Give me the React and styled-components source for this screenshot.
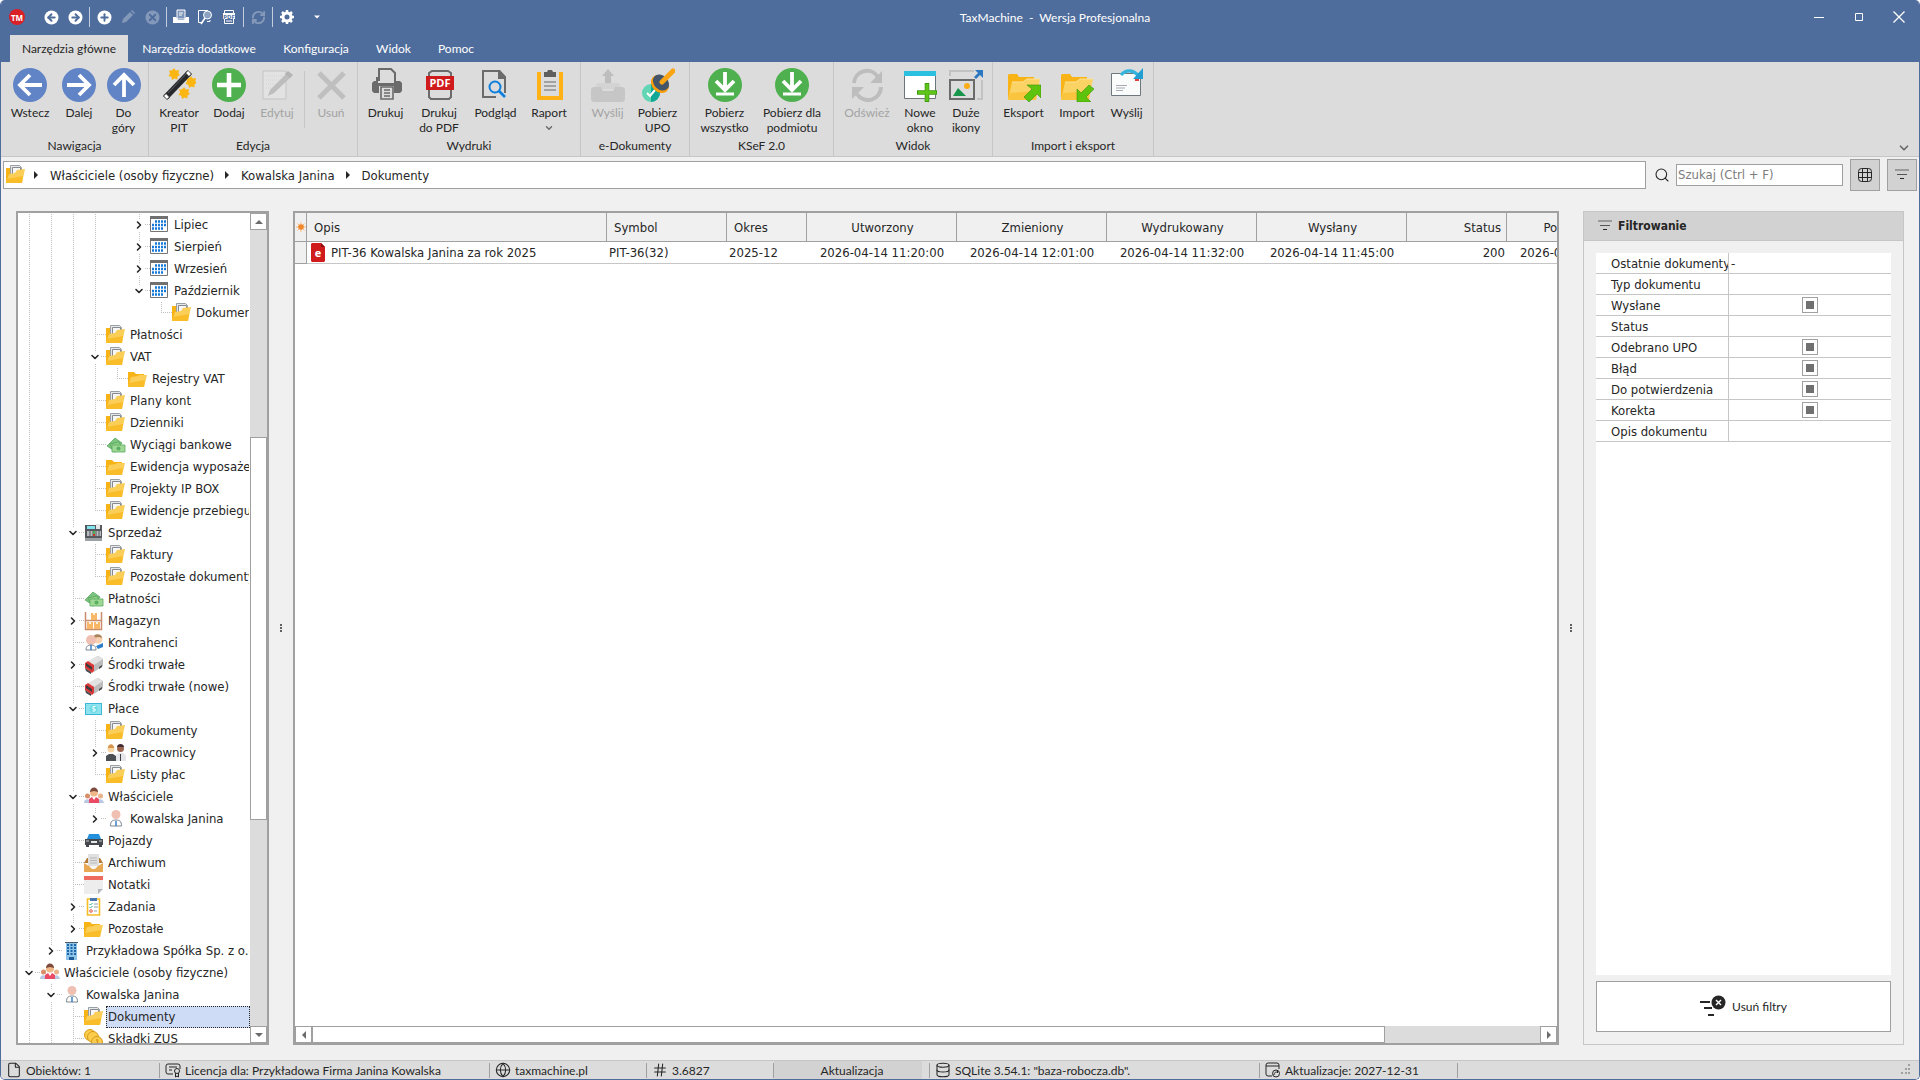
import React from "react";
import styled, { createGlobalStyle, css } from "styled-components";
import {
  ArrowLeft,
  ArrowRight,
  ChevronDown,
  ChevronRight,
  Database,
  File,
  Globe,
  Hash,
  Plus,
  RefreshCw,
  Search,
  X,
} from "lucide-react";

const GlobalStyle = createGlobalStyle`
  * {
    box-sizing: border-box;
  }

  body {
    margin: 0;
    background: #fff;
    color: #262626;
    font-family: "DejaVu Sans Condensed", "Noto Sans", sans-serif;
    font-size: 13px;
  }

  button,
  input {
    margin: 0;
    padding: 0;
    border: 0;
    background: none;
    color: inherit;
    font: inherit;
  }

  svg {
    display: block;
    flex: none;
  }
`;

const uiFont = css`
  font-family: Lato, "Open Sans", sans-serif;
  font-size: 12px;
`;

/* ---------- window ---------- */

const Window = styled.div`
  display: flex;
  flex-direction: column;
  height: 100vh;
  min-height: 480px;
  overflow: hidden;
  background: #f0f0f0;
  border: 1px solid #4f6d9c;
  border-top: 0;
  border-radius: 5px;
`;

const Caption = styled.header`
  background: #4f6d9c;
  color: #fff;
  ${uiFont}
`;

const TitleBar = styled.div`
  display: flex;
  align-items: center;
  height: 34px;
  margin-bottom: 1px;
`;

const Logo = styled.span`
  display: grid;
  place-items: center;
  width: 16px;
  height: 16px;
  margin: 0 14px 0 8px;
  border-radius: 50%;
  background: #d92027;
  font-family: "Open Sans", sans-serif;
  font-size: 8px;
  font-weight: 700;
`;

const QuickButton = styled.button`
  display: grid;
  place-items: center;
  width: 24px;
  height: 24px;
  color: #fff;
  opacity: ${(p) => (p.disabled ? 0.3 : 1)};
`;

const QuickLine = styled.span`
  width: 1px;
  height: 20px;
  margin: 0 2px;
  background: #c3cddd;
`;

const QuickMore = styled(QuickButton)`
  margin-left: 6px;
`;

const Title = styled.h1`
  flex: 1;
  margin: 0;
  padding-right: 18px;
  text-align: center;
  font-size: 12px;
  font-weight: 400;
  white-space: pre;
`;

const WindowButton = styled(QuickButton)`
  width: 40px;
`;

const Tabs = styled.nav`
  display: flex;
  gap: 2px;
  height: 27px;
  padding-left: 9px;
`;

const Tab = styled.button`
  min-width: ${(p) => p.$width}px;
  background: ${(p) => (p.$active ? "#dcdcdc" : "transparent")};
  color: ${(p) => (p.$active ? "#262626" : "#fff")};
  white-space: nowrap;
`;

/* ---------- ribbon ---------- */

const Ribbon = styled.div`
  display: flex;
  height: 95px;
  background: #dcdcdc;
  border-bottom: 1px solid #c6c6c6;
  ${uiFont}
`;

const Group = styled.section`
  display: flex;
  flex-direction: column;
  justify-content: space-between;
  padding: 6px 4px 2px;
  border-right: 1px solid #c6c6c6;
`;

const GroupButtons = styled.div`
  display: flex;
`;

const GroupTitle = styled.div`
  text-align: center;
  line-height: 16px;
`;

const RibbonButton = styled.button`
  display: flex;
  flex-direction: column;
  align-items: center;
  width: ${(p) => p.$width}px;
  gap: 3px;
  line-height: 15px;
  color: ${(p) => (p.disabled ? "#a3a3a3" : "#262626")};
`;

const RibbonLabel = styled.span`
  white-space: pre;
`;

const RibbonLine = styled.span`
  width: 1px;
  height: 57px;
  margin: 3px 4px 0 3px;
  background: #c6c6c6;
`;

const Collapse = styled.button`
  align-self: flex-end;
  margin: 0 8px 1px auto;
  color: #6b6b6b;
`;

/* ---------- address bar ---------- */

const AddressRow = styled.div`
  display: flex;
  align-items: center;
  height: 36px;
  padding: 0 2px;
`;

const Breadcrumbs = styled.nav`
  display: flex;
  flex: 1;
  align-items: center;
  height: 28px;
  padding-left: 2px;
  gap: 6px;
  background: #fff;
  border: 1px solid #a0a0a0;
`;

const CrumbItem = styled.span`
  display: flex;
  align-items: center;
  gap: 10px;
  margin-right: 3px;
`;

const Crumb = styled.a`
  color: #262626;
  text-decoration: none;
`;

const SearchLabel = styled.label`
  display: flex;
  align-items: center;
  gap: 6px;
  margin-left: 8px;
`;

const SearchInput = styled.input`
  width: 167px;
  height: 22px;
  padding: 0 1px 1px;
  background: #fff;
  border: 1px solid #a0a0a0;

  &::placeholder {
    color: #7d7d7d;
  }
`;

const ToggleButton = styled.button`
  display: grid;
  place-items: center;
  width: 30px;
  height: 32px;
  margin-left: 7px;
  background: #d2d2d2;
  border: 1px solid #a0a0a0;
`;

/* ---------- work area ---------- */

const Work = styled.main`
  display: flex;
  flex: 1;
  min-height: 0;
  padding: 18px 15px 15px;
`;

const Splitter = styled.div`
  display: flex;
  flex: none;
  flex-direction: column;
  align-items: center;
  justify-content: center;
  gap: 1px;
  width: 24px;
`;

const Dot = styled.i`
  width: 2px;
  height: 2px;
  background: #606060;
`;

const TreePanel = styled.aside`
  display: flex;
  flex: none;
  width: 253px;
  overflow: hidden;
  background: #fff;
  border: 2px solid #a0a0a0;
`;

const Tree = styled.ul`
  flex: 1;
  min-width: 0;
  margin: 0;
  padding: 1px 0 0;
  overflow: hidden;
  list-style: none;
`;

const TreeRow = styled.li`
  display: flex;
  height: 22px;
  white-space: nowrap;
`;

const vertical = "repeating-linear-gradient(#c0c0c0 0 1px, transparent 1px 2px)";
const horizontal = "repeating-linear-gradient(90deg, #c0c0c0 0 1px, transparent 1px 2px)";

const guides = {
  none: css``,
  line: css`
    background: ${vertical} 11px 0 / 1px 22px no-repeat;
  `,
  tee: css`
    background: ${vertical} 11px 0 / 1px 22px no-repeat, ${horizontal} 11px 10px / 11px 1px no-repeat;
  `,
  elbow: css`
    background: ${vertical} 11px 0 / 1px 11px no-repeat, ${horizontal} 11px 10px / 11px 1px no-repeat;
  `,
};

const Guide = styled.span`
  display: grid;
  flex: none;
  place-items: center;
  width: 22px;
  ${(p) => guides[p.$kind]}
`;

const Expander = styled.button`
  display: grid;
  place-items: center;
  width: 12px;
  height: 12px;
  background: #fff;
`;

const TreeIcon = styled.span`
  display: flex;
  flex: none;
  align-items: center;
  width: 22px;
`;

const TreeLabel = styled.span`
  flex: 1;
  min-width: 0;
  padding-left: 1px;
  overflow: hidden;
  border: 1px dotted ${(p) => (p.$selected ? "#262626" : "transparent")};
  background: ${(p) => (p.$selected ? "#cfdcf5" : "none")};
  line-height: 20px;
`;

const ScrollBar = styled.div`
  display: flex;
  flex: none;
  flex-direction: ${(p) => (p.$vertical ? "column" : "row")};
  ${(p) => (p.$vertical ? "width: 17px;" : "height: 17px;")}
  background: #dcdcdc;
`;

const ScrollButton = styled.button`
  display: grid;
  flex: none;
  place-items: center;
  width: 17px;
  height: 17px;
  background: #fff;
  border: 1px solid #a0a0a0;
`;

const Track = styled.div`
  flex: ${(p) => p.$size} 1 0;
`;

const Thumb = styled(Track)`
  background: #fff;
  border: 1px solid #a0a0a0;
`;

/* ---------- documents ---------- */

const GridPanel = styled.section`
  display: flex;
  flex: 1;
  flex-direction: column;
  min-width: 0;
  overflow: hidden;
  background: #fff;
  border: 2px solid #a0a0a0;
`;

const GridView = styled.div`
  flex: 1;
  overflow: hidden;
`;

const Table = styled.table`
  width: 1362px;
  table-layout: fixed;
  border-collapse: separate;
  border-spacing: 0;
`;

const Head = styled.th`
  width: ${(p) => p.$width}px;
  height: 29px;
  padding: ${(p) => (p.$mark ? "0" : "1px 5px 0 7px")};
  border-right: 1px solid #a0a0a0;
  border-bottom: 1px solid #a0a0a0;
  background: #f0f0f0;
  font-weight: 400;
  text-align: ${(p) => p.$align || "left"};
`;

const Cell = styled.td`
  height: 22px;
  padding: 0 2px;
  border-bottom: 1px solid #c6c6c6;
  text-align: ${(p) => p.$align || "left"};
  white-space: nowrap;
`;

const MarkCell = styled(Cell)`
  background: #f0f0f0;
  border-right: 1px solid #a0a0a0;
  border-bottom-color: #a0a0a0;
`;

const DocName = styled.div`
  display: flex;
  align-items: center;
  gap: 6px;
  padding-left: 2px;
`;

/* ---------- filters ---------- */

const FilterPanel = styled.aside`
  display: flex;
  flex: none;
  flex-direction: column;
  width: 321px;
  border: 1px solid #c6c6c6;
`;

const FilterHead = styled.h2`
  display: flex;
  align-items: center;
  gap: 6px;
  height: 29px;
  margin: 0;
  padding: 0 0 1px 14px;
  background: #d2d2d2;
  border-bottom: 1px solid #c6c6c6;
  font-size: 12px;
`;

const FilterBody = styled.div`
  flex: 1;
  margin: 12px 12px 6px;
  background: #fff;
`;

const FilterRow = styled.label`
  display: grid;
  grid-template-columns: 132px 1fr;
  height: 21px;
  border-bottom: 1px solid #c6c6c6;
  line-height: 21px;
`;

const FilterName = styled.span`
  padding-left: 15px;
  overflow: hidden;
  white-space: nowrap;
`;

const FilterValue = styled.span`
  display: grid;
  place-items: center;
  border-left: 1px solid #c6c6c6;
`;

const FilterInput = styled.input`
  width: 100%;
  padding-left: 2px;
`;

const TriState = styled.input`
  appearance: none;
  width: 16px;
  height: 16px;
  border: 1px solid #a0a0a0;
  background: linear-gradient(#707070, #707070) center / 8px 8px no-repeat;
`;

const ClearButton = styled.button`
  display: flex;
  align-items: center;
  justify-content: center;
  gap: 6px;
  height: 51px;
  margin: 0 12px 12px;
  background: #fff;
  border: 1px solid #a0a0a0;
  ${uiFont}
`;

/* ---------- status bar ---------- */

const StatusBar = styled.footer`
  display: flex;
  flex: none;
  align-items: center;
  height: 19px;
  background: #dcdcdc;
  border-top: 1px solid #c6c6c6;
  ${uiFont}
`;

const StatusItem = styled.div`
  display: flex;
  align-items: center;
  gap: 4px;
  width: ${(p) => p.$width}px;
  height: 15px;
  padding-left: 5px;
  border-right: 1px solid #a0a0a0;
  white-space: nowrap;
`;

const StatusAction = styled.button`
  width: 148px;
  height: 18px;
  padding-left: 8px;
  background: #d2d2d2;
`;

const Grip = styled.span`
  margin: 0 8px 0 auto;
`;

/* ---------- icons ---------- */

const Svg = ({ size = 34, children, ...rest }) => (
  <svg width={size} height={size} viewBox={`0 0 ${size} ${size}`} fill="none" {...rest}>
    {children}
  </svg>
);

const ArrowIcon = ({ turn = 0 }) => (
  <Svg>
    <circle cx="17" cy="17" r="17" fill="#6184c6" />
    <path
      d="M29 17H8M17 7 7 17l10 10"
      stroke="#fff"
      strokeWidth="3.8"
      transform={`rotate(${turn} 17 17)`}
    />
  </Svg>
);

const star = "m0-6 1.8 2.6 3.2-.6-.6 3.2L6 1 3.4 2.6 3.6 5.6.6 4.4-2 6l-.6-3.2L-5.6 2l1.6-2.6L-5-3.6l3.2-.2z";

const WandIcon = () => (
  <Svg>
    {[[12, 6], [29, 14], [22, 25]].map(([x, y]) => (
      <path key={x} d={star} transform={`translate(${x} ${y})`} fill="#fbb614" />
    ))}
    <path d="M4 29 27 5" stroke="#26282b" strokeWidth="6" />
    <path d="M6 25 25 5" stroke="#5b5e63" strokeWidth="1" />
    <path d="m3 30 3-3M25 7l3-3" stroke="#3a3d40" strokeWidth="6" />
    <path d="m3.5 29.5 2-2M25.5 6.5l2-2" stroke="#fff" strokeWidth="4" />
  </Svg>
);

const AddIcon = () => (
  <Svg>
    <circle cx="17" cy="17" r="17" fill="#4fb04f" />
    <path d="M17 5v24M5 17h24" stroke="#fff" strokeWidth="4.6" />
  </Svg>
);

const EditIcon = () => (
  <Svg>
    <path d="M3 3h23v28H3z" fill="#e2e2e2" stroke="#c4c4c4" />
    <path d="M6 8h17M6 12h16M6 16h12M6 20h9" stroke="#d4d4d4" strokeDasharray="1 1" />
    <path d="m8 28 2-6L27 5l4 4-17 16z" fill="#bdbdbd" />
    <path d="M25 6l3-3 5 4-3 3z" fill="#b3b3b3" />
  </Svg>
);

const DeleteIcon = () => (
  <Svg>
    <path d="m5 5 25 25M30 5 5 30" stroke="#bfbfbf" strokeWidth="5" />
  </Svg>
);

const PrintIcon = () => (
  <Svg>
    <path d="M10 13V1h12l4 4v8" stroke="#6b6b6b" strokeWidth="2" />
    <path d="M5 13h2v-4h2v6h16V9h2v4h4l2 2v8l-2 2H5l-2-2v-8z" fill="#6b6b6b" />
    <path d="M10 18h15v14H10z" fill="#dcdcdc" />
    <path d="M12 19h12v12H12zM15 22h6M15 25h6M15 28h6" stroke="#6b6b6b" strokeWidth="1.6" />
  </Svg>
);

const PdfIcon = () => (
  <Svg>
    <path d="M7 8V5l3-2h16l3 2v24l-2 2H9l-2-2z" stroke="#6b6b6b" strokeWidth="2" />
    <rect x="4" y="8" width="28" height="14" fill="#cf1b1b" />
    <text x="18" y="19" textAnchor="middle" fill="#fff" fontSize="11" fontWeight="700" fontFamily="Open Sans">
      PDF
    </text>
  </Svg>
);

const PreviewIcon = () => (
  <Svg>
    <path d="M8 29H4V3h16l6 6v16" stroke="#6b6b6b" strokeWidth="2" />
    <path d="M19 2h2l6 7v2h-8z" fill="#6b6b6b" />
    <path d="M8 29h9" stroke="#6b6b6b" strokeWidth="2" />
    <circle cx="16" cy="19" r="5.5" fill="#dcdcdc" stroke="#0d7fdc" strokeWidth="2" />
    <path d="m20 23 6 6" stroke="#0d7fdc" strokeWidth="2.6" />
  </Svg>
);

const ReportIcon = () => (
  <Svg>
    <path d="M7 4v26h22V4" fill="#dcdcdc" stroke="#ffb115" strokeWidth="4" />
    <path d="M12 4h3l1-2h4l1 2h3v5H12z" fill="#5f5f5f" />
    <path d="M12 14h12M12 18h12M12 22h12" stroke="#8e8e8e" strokeWidth="1.6" />
  </Svg>
);

const UploadIcon = () => (
  <Svg>
    <path d="M6 15h22l3 6H3z" fill="#d3d3d3" />
    <path d="M2 19h8l2 4h10l2-4h8l2 2v11l-2 2H2l-2-2V21z" fill="#c6c6c6" />
    <path d="m17 1 6 7h-3v7h-6V8h-3z" fill="#bdbdbd" />
  </Svg>
);

const StampIcon = () => (
  <Svg>
    <circle cx="10" cy="25" r="9" fill="#62d6b4" />
    <path d="M10 16a9 9 0 0 1 0 18z" fill="#0fa896" />
    <path d="m6 25 3 3 5-6" stroke="#fff" strokeWidth="2" />
    <ellipse cx="19" cy="16" rx="10" ry="8" transform="rotate(45 19 16)" fill="#f99d0b" />
    <ellipse cx="20" cy="14.5" rx="9" ry="7" transform="rotate(45 20 14.5)" fill="#44556a" />
    <path d="m21 14 11-11" stroke="#fba515" strokeWidth="5" strokeLinecap="round" />
  </Svg>
);

const DownloadIcon = () => (
  <Svg>
    <circle cx="17" cy="17" r="17" fill="#4fb04f" />
    <path d="M17 4v18M8 13l9 9 9-9" stroke="#fff" strokeWidth="3.8" />
    <path d="M8 26h18" stroke="#fff" strokeWidth="3" />
  </Svg>
);

const RefreshIcon = () => (
  <Svg>
    <path d="M4 15A13 13 0 0 1 28 9M31 19A13 13 0 0 1 7 26" stroke="#bdbdbd" strokeWidth="4" />
    <path d="M32 3v12H20zM2 31V19h12z" fill="#bdbdbd" />
  </Svg>
);

const NewWindowIcon = () => (
  <Svg>
    <path d="M1.5 3.5h31v27h-31z" fill="#fff" stroke="#6c757c" />
    <path d="M1 3h32v5H1z" fill="#2bbfe0" />
    <path d="M24 15v19M14 24.5h20" stroke="#3f9c10" strokeWidth="4.6" />
    <path d="M24 16v17M15 24.5h18" stroke="#5fc419" strokeWidth="3" />
  </Svg>
);

const LargeIconsIcon = () => (
  <Svg>
    <path d="M1 8V3h24M28 31h5V12" stroke="#c2c2c2" strokeWidth="2" />
    <path d="M1 12h24v19H1z" stroke="#6b6b6b" strokeWidth="2" />
    <path d="m4 28 5-8 8 8z" fill="#17954a" />
    <circle cx="18" cy="18" r="3" fill="#fbac18" />
    <path d="M26 2h8v8zM25 9l6-6 2 2-6 6z" fill="#2b78c0" />
  </Svg>
);

const BigFolder = () => (
  <>
    <path d="M1 7l1-1h8l2 3h15v5H1zM1 10h5v21l-5-1z" fill="#f8b417" />
    <path d="M5 14h11l4-3h13l-4 21H1z" fill="#fbd264" />
    <path d="m3 25 27-2-1 9H1z" fill="#f9c53f" />
    <path d="M5 14h11l4-3h13" stroke="#fce29a" />
  </>
);

const ExportIcon = () => (
  <Svg>
    <BigFolder />
    <path d="M20 17h14v13l-4-4-8 8-5-5 8-8z" fill="#5ec30c" stroke="#3b9009" strokeWidth=".6" />
  </Svg>
);

const ImportIcon = () => (
  <Svg>
    <BigFolder />
    <path d="M17 34V21l4 4 8-8 5 4-8 8 5 5z" fill="#5ec30c" stroke="#3b9009" strokeWidth=".6" />
  </Svg>
);

const SendIcon = () => (
  <Svg>
    <path d="M1.5 5.5h29v22h-29z" fill="#fafbfb" stroke="#6f777e" />
    <path d="M6 17.5h11M6 20h9M6 22.5h7" stroke="#a5abb0" />
    <path d="M25 9h4v4h-4z" fill="#e0423d" />
    <path d="M11 7c5-6 12-5 17 0" stroke="#35b5dd" strokeWidth="3.2" />
    <path d="M33 0v11H23z" fill="#229fd2" />
  </Svg>
);

const Folder = ({ papers }) =>
  papers ? (
    <Svg size={20}>
      <path d="M0 3h4v14H0z" fill="#f8b417" />
      <path d="M4.5.5h9l2 2v8h-11z" fill="#e6e7e8" stroke="#9a9fa3" />
      <path d="M6.5 2.500h8v8h-8z" fill="#f6f6f6" stroke="#858b90" />
      <path d="m3 9 6-1 2-3 8-1-3 14H0z" fill="#fbce57" />
      <path d="m1 14 16-3-1 7H0z" fill="#f9bd2a" />
    </Svg>
  ) : (
    <Svg size={20}>
      <path d="M0 3h6l2 2h8v4H0zM0 5h4v12H0z" fill="#f8b417" />
      <path d="m3 8 7-1 1-1h8l-3 12H0z" fill="#fbce57" />
      <path d="m1 14 16-3-1 7H0z" fill="#f9bd2a" />
    </Svg>
  );

const Calendar = () => (
  <Svg size={20}>
    <path d="M.5 2.500h17v14H.5z" fill="#fff" stroke="#757575" />
    <path d="M0 1h18v3H0z" fill="#707070" />
    <path d="M5 6.500h11M2 10h14M2 13.500h11" stroke="#1479d8" strokeWidth="2.4" strokeDasharray="2 1" />
  </Svg>
);

const Money = () => (
  <Svg size={20}>
    <path d="m1 11 8-8 7 5-6 9z" fill="#7cc47f" stroke="#4fa158" strokeWidth=".7" />
    <path d="m4 9 9-2 4 8-9 2z" fill="#92cf87" stroke="#4fa158" strokeWidth=".7" />
    <path d="M6 10h13v7H6z" fill="#9fd894" stroke="#58a95f" strokeWidth=".8" />
    <circle cx="12.5" cy="13.5" r="2" fill="#5aae62" />
  </Svg>
);

const Register = () => (
  <Svg size={20}>
    <path d="M1 2h17v16H1z" fill="#55595e" />
    <path d="M3 3h8v3H3z" fill="#7fe3f2" />
    <path d="M3 8h14v5H3z" fill="#b9bcbf" />
    <path d="M6 8v5M9 8v5M12 8v5M15 8v5" stroke="#55595e" />
    <path d="M9 8h2v3H9z" fill="#4caf50" />
    <path d="M9 11h2v2H9z" fill="#d0392f" />
    <path d="M12 1h4v5h-4z" fill="#e6e6e6" />
    <path d="M1 15h17v3H1z" fill="#9ba0a5" />
  </Svg>
);

const Warehouse = () => (
  <Svg size={20}>
    <path d="M1.5 1v18M17.5 1v18M1 9.500h17M1 18.500h17" stroke="#c98c6c" strokeWidth="1.5" />
    <path d="M7 2h6v7H7zM3 11h6v7H3zM10 11h6v7h-6z" fill="#f8b767" />
    <path d="M9 2h2v2H9zM5 11h2v2H5zM12 11h2v2h-2z" fill="#fff0d9" />
  </Svg>
);

const Partners = () => (
  <Svg size={20}>
    <circle cx="14" cy="6" r="4.5" fill="#f6cfb1" />
    <path d="M9 5c0-5 9-5 9 0l-3-1z" fill="#a8835b" />
    <path d="m12 13 7-3v4l-5 2z" fill="#2d7fcd" />
    <circle cx="7" cy="7" r="5" fill="#efbfb2" />
    <path d="M2 17c0-4 2-5 5-5s5 1 5 5z" fill="#fff" stroke="#7d8790" />
    <path d="M7 12v5" stroke="#3880c4" strokeWidth="1.5" />
  </Svg>
);

const Truck = () => (
  <Svg size={20}>
    <path d="m8 6 6-5 5 3v7l-9 6z" fill="#bcbcbc" />
    <path d="m4 6 9-5 6 3-9 6z" fill="#e2e2e2" />
    <path d="m1 8 3-2 6 4v6l-2 2-7-5z" fill="#dc3838" />
    <path d="m2 8 6 4v3L2 11z" fill="#3a3d40" />
    <path d="m1 13 6 4v2l-5-3zM15 12l3-2v2l-3 2z" fill="#46494d" />
  </Svg>
);

const Banknote = () => (
  <Svg size={20}>
    <path d="M1 4h17v12H1z" fill="#3cb7d8" />
    <path d="M2 5h15v10H2z" fill="#8fe3ee" />
    <circle cx="9.5" cy="10" r="4" fill="#6edbe7" />
    <path d="M11.5 7.500H9v2.500h2v2H8.500" stroke="#fff" />
  </Svg>
);

const Workers = () => (
  <Svg size={20}>
    <circle cx="5" cy="6" r="3.5" fill="#f8d6a5" />
    <path d="M2 5c0-5 6-5 6 0z" fill="#d8954b" />
    <path d="M0 18v-5l3-2h4l3 2v5z" fill="#4c4f54" />
    <circle cx="14.5" cy="5.5" r="3.5" fill="#9a6650" />
    <path d="M11 4c0-4 7-4 7 0z" fill="#432d33" />
    <path d="M10 18v-6l3-2h4l3 2v6z" fill="#e4e6e9" />
    <path d="M14 11h1v7h-1z" fill="#3d4045" />
  </Svg>
);

const Team = () => (
  <Svg size={20}>
    <circle cx="3.5" cy="9" r="2.5" fill="#d98e68" />
    <circle cx="16.5" cy="9" r="2.5" fill="#eab38c" />
    <path d="M0 16c0-5 6-5 7 0zM13 16c0-5 6-5 7 0z" fill="#b7c7e4" />
    <circle cx="10" cy="5.5" r="4" fill="#f0b789" />
    <path d="M6 5c0-6 8-6 8 0l-4-1z" fill="#7c4a3f" />
    <path d="M5 16v-4l3-2h4l3 2v4z" fill="#ea4a63" />
    <path d="m8 10 2 3 2-3z" fill="#fff" />
  </Svg>
);

const Person = () => (
  <Svg size={20}>
    <circle cx="10" cy="5.5" r="4.5" fill="#efbfb2" />
    <path d="M4.5 17c0-5 2-6 5.500-6s5.500 1 5.500 6z" fill="#fff" stroke="#7d8790" />
    <path d="M10 12v5" stroke="#3880c4" strokeWidth="1.5" />
  </Svg>
);

const Car = () => (
  <Svg size={20}>
    <path d="M5 3h10l2 5H3z" fill="#2390de" />
    <path d="M1 8h18v6H1zM2 13h3v3H2zM15 13h3v3h-3z" fill="#45484d" />
    <path d="M7 10h6v2H7z" fill="#e8e8e8" />
    <path d="M2 10h3M15 10h3" stroke="#c7cacd" />
  </Svg>
);

const Archive = () => (
  <Svg size={20}>
    <path d="m0 10 3-5h13l3 5z" fill="#b77a35" />
    <path d="M4 1h11v12H4z" fill="#e0e0e0" />
    <path d="M6 5h7M6 7.500h7M6 10h7" stroke="#b9b9b9" />
    <path d="m0 10 5 3h9l5-3v9H0z" fill="#e9a853" />
    <path d="M5 13h9l-3 3H8z" fill="#f7f7f7" />
  </Svg>
);

const Note = () => (
  <Svg size={20}>
    <path d="M0 1h19v13l-5 5H0z" fill="#ededed" />
    <path d="M0 1h19v4H0z" fill="#ee6b60" />
    <path d="M14 19v-5h5z" fill="#b5b9bd" />
  </Svg>
);

const Tasks = () => (
  <Svg size={20}>
    <path d="M3.5 2h12v16h-12z" fill="#fff" stroke="#f6bd27" strokeWidth="1.6" />
    <path d="M6 1h7v3H6z" fill="#4c77ad" />
    <path d="m5.5 7 1 1 2-2M5.500 10l1 1 2-2" stroke="#31b197" />
    <path d="M10 7h4M10 10h4M10 14h3" stroke="#8d9ba8" />
    <circle cx="7" cy="14" r="1.3" stroke="#e5534b" />
  </Svg>
);

const Office = () => (
  <Svg size={20}>
    <path d="M4 1h11v18H4z" fill="#8fc3e8" />
    <path d="M3 1h13v1H3z" fill="#4e5a63" />
    <path d="M5 4h9.500M5 7h9.500M5 10h9.500M5 13h9.500" stroke="#1d66a8" strokeWidth="2" strokeDasharray="2 1.5" />
    <path d="M7 16h5v3H7z" fill="#1d5c96" />
  </Svg>
);

const Coins = () => (
  <Svg size={20}>
    {[[6, 6], [9, 8], [13, 13]].map(([x, y]) => (
      <circle key={x} cx={x} cy={y} r="5.5" fill="#fbcd4a" stroke="#d89b1c" />
    ))}
    <path d="M12 11h1.500v5" stroke="#d89b1c" strokeWidth="1.5" />
  </Svg>
);

const FilterLines = () => (
  <Svg size={14}>
    <path d="M0 2h14" stroke="#9a9a9a" strokeWidth="2" />
    <path d="M2 6.500h10" stroke="#555" />
    <path d="M5 10.500h4" stroke="#262626" />
  </Svg>
);

const GridIcon = () => (
  <Svg size={14}>
    <rect x=".5" y=".5" width="13" height="13" rx="3" stroke="#262626" />
    <path d="M4.5 0v14M9.500 0v14M0 4.500h14M0 9.500h14" stroke="#262626" />
  </Svg>
);

const ClearFilterIcon = () => (
  <Svg size={26}>
    <path d="M0 8h10M4 14h8M8 21h6" stroke="#262626" strokeWidth="2" />
    <circle cx="18.5" cy="8.5" r="7" fill="#262626" />
    <path d="m16 6 5 5m0-5-5 5" stroke="#fff" strokeWidth="1.4" />
  </Svg>
);

const DocIcon = () => (
  <svg width="14" height="19" viewBox="0 0 14 19">
    <path d="M1 0h9l4 4v14l-1 1H1l-1-1V1z" fill="#cf1b1b" />
    <path d="M10 0l4 4h-4z" fill="#8c0f0f" />
    <text x="7" y="14" textAnchor="middle" fill="#fff" fontSize="11" fontWeight="700" fontFamily="Open Sans">
      e
    </text>
  </svg>
);

const SunIcon = () => (
  <svg width="11" height="10" viewBox="0 0 11 10">
    <path d="M6 0v10M1 5h10M2.500 1.500l7 7M9.500 1.500l-7 7" stroke="#f6b981" />
    <circle cx="6" cy="5" r="2.8" fill="#f0872b" />
  </svg>
);

const Triangle = ({ turn = 0, size = 8, color = "#6b6b6b" }) => (
  <svg width={size} height={size} viewBox="0 0 8 8">
    <path d="M2 0v8l4-4z" fill={color} transform={`rotate(${turn} 4 4)`} />
  </svg>
);

const DiscArrow = ({ icon: Icon }) => (
  <svg width="15" height="15" viewBox="0 0 15 15">
    <circle cx="7.5" cy="7.5" r="7" fill="#fff" />
    <Icon x="2" y="2" size={11} strokeWidth={4.2} color="#4f6d9c" />
  </svg>
);

const QuickPrint = () => (
  <Svg size={16}>
    <path d="M0 8h3l2 3h6l2-3h3v6H0z" fill="#fff" />
    <path d="M4 1h8v9H4z" fill="#7e96ba" stroke="#fff" />
    <path d="M6 4h4M6 6h3" stroke="#fff" />
  </Svg>
);

const QuickPreview = () => (
  <Svg size={16}>
    <path d="M11 1.500H1.500v12H6m4-1h3V11" stroke="#fff" />
    <circle cx="10.5" cy="6" r="4" fill="#8ca1c2" stroke="#fff" />
    <path d="m8 9-4 6" stroke="#fff" strokeWidth="1.6" />
  </Svg>
);

const QuickPdf = () => (
  <Svg size={16}>
    <path d="M3.5 5V1.500h9V5M3.500 9v5.500h9V9M5 12h6" stroke="#fff" />
    <path d="M2 4h12v6H2z" fill="#fff" />
    <text x="8" y="9.5" textAnchor="middle" fill="#4f6d9c" fontSize="6" fontWeight="700" fontFamily="Open Sans">
      PDF
    </text>
  </Svg>
);

const QuickPencil = () => (
  <Svg size={14}>
    <path d="m1 13 1-4 7-7 3 3-7 7zM10 1l1-1 3 3-1 1z" fill="#fff" />
  </Svg>
);

const LicenceIcon = () => (
  <Svg size={16}>
    <path d="M8 12H3a2 2 0 0 1-2-2V4a2 2 0 0 1 2-2h10a2 2 0 0 1 2 2v3M4 5h8M4 8h3" stroke="#262626" />
    <circle cx="12" cy="9" r="2.5" stroke="#262626" />
    <path d="M10.5 11v4l1.500-1 1.500 1v-4" stroke="#262626" />
  </Svg>
);

const UpdatesIcon = () => (
  <Svg size={16}>
    <path d="M7 14H3a2 2 0 0 1-2-2V3a2 2 0 0 1 2-2h9a2 2 0 0 1 2 2v4M1 4h13" stroke="#262626" />
    <circle cx="11" cy="11.5" r="3.5" fill="#dcdcdc" stroke="#262626" />
    <path d="M9 13c0-3 2-3 4-3m-1-1 1 1-1 1" stroke="#262626" />
  </Svg>
);

const GripIcon = () => (
  <Svg size={12}>
    <path d="M9 1h2M6 5h2M9 5h2M2 9h2M6 9h2M9 9h2" stroke="#a0a0a0" strokeWidth="2" />
  </Svg>
);

/* ---------- data ---------- */

const tabs = [
  ["Narzędzia główne", 118],
  ["Narzędzia dodatkowe", 138],
  ["Konfiguracja", 92],
  ["Widok", 59],
  ["Pomoc", 62],
];

const ribbon = [
  {
    title: "Nawigacja",
    buttons: [
      { label: "Wstecz", width: 50, icon: <ArrowIcon /> },
      { label: "Dalej", width: 48, icon: <ArrowIcon turn={180} /> },
      { label: "Do\ngóry", width: 41, icon: <ArrowIcon turn={90} /> },
    ],
  },
  {
    title: "Edycja",
    buttons: [
      { label: "Kreator\nPIT", width: 52, icon: <WandIcon /> },
      { label: "Dodaj", width: 48, icon: <AddIcon /> },
      { label: "Edytuj", width: 48, icon: <EditIcon />, disabled: true },
      { label: "Usuń", width: 44, icon: <DeleteIcon />, disabled: true, line: true },
    ],
  },
  {
    title: "Wydruki",
    buttons: [
      { label: "Drukuj", width: 47, icon: <PrintIcon /> },
      { label: "Drukuj\ndo PDF", width: 60, icon: <PdfIcon /> },
      { label: "Podgląd", width: 53, icon: <PreviewIcon /> },
      { label: "Raport", width: 54, icon: <ReportIcon />, menu: true },
    ],
  },
  {
    title: "e-Dokumenty",
    buttons: [
      { label: "Wyślij", width: 45, icon: <UploadIcon />, disabled: true },
      { label: "Pobierz\nUPO", width: 55, icon: <StampIcon /> },
    ],
  },
  {
    title: "KSeF 2.0",
    buttons: [
      { label: "Pobierz\nwszystko", width: 61, icon: <DownloadIcon /> },
      { label: "Pobierz dla\npodmiotu", width: 74, icon: <DownloadIcon /> },
    ],
  },
  {
    title: "Widok",
    buttons: [
      { label: "Odśwież", width: 58, icon: <RefreshIcon />, disabled: true },
      { label: "Nowe\nokno", width: 48, icon: <NewWindowIcon /> },
      { label: "Duże\nikony", width: 44, icon: <LargeIconsIcon /> },
    ],
  },
  {
    title: "Import i eksport",
    buttons: [
      { label: "Eksport", width: 53, icon: <ExportIcon /> },
      { label: "Import", width: 54, icon: <ImportIcon /> },
      { label: "Wyślij", width: 45, icon: <SendIcon /> },
    ],
  },
];

const papers = <Folder papers />;
const folder = <Folder />;

// guides: | line, . empty, + tee, L elbow; the last one belongs to the row itself
const tree = [
  ["||||.+", "Lipiec", <Calendar />, "closed"],
  ["||||.+", "Sierpień", <Calendar />, "closed"],
  ["||||.+", "Wrzesień", <Calendar />, "closed"],
  ["||||.L", "Październik", <Calendar />, "open"],
  ["||||..L", "Dokumenty", papers],
  ["|||+", "Płatności", papers],
  ["|||+", "VAT", papers, "open"],
  ["||||L", "Rejestry VAT", folder],
  ["|||+", "Plany kont", papers],
  ["|||+", "Dzienniki", papers],
  ["|||+", "Wyciągi bankowe", <Money />],
  ["|||+", "Ewidencja wyposażenia", folder],
  ["|||+", "Projekty IP BOX", papers],
  ["|||L", "Ewidencje przebiegu", papers],
  ["||+", "Sprzedaż", <Register />, "open"],
  ["|||+", "Faktury", papers],
  ["|||L", "Pozostałe dokumenty", papers],
  ["||+", "Płatności", <Money />],
  ["||+", "Magazyn", <Warehouse />, "closed"],
  ["||+", "Kontrahenci", <Partners />],
  ["||+", "Środki trwałe", <Truck />, "closed"],
  ["||+", "Środki trwałe (nowe)", <Truck />],
  ["||+", "Płace", <Banknote />, "open"],
  ["|||+", "Dokumenty", papers],
  ["|||+", "Pracownicy", <Workers />, "closed"],
  ["|||L", "Listy płac", papers],
  ["||+", "Właściciele", <Team />, "open"],
  ["|||L", "Kowalska Janina", <Person />, "closed"],
  ["||+", "Pojazdy", <Car />],
  ["||+", "Archiwum", <Archive />],
  ["||+", "Notatki", <Note />],
  ["||+", "Zadania", <Tasks />, "closed"],
  ["||L", "Pozostałe", folder, "closed"],
  ["|L", "Przykładowa Spółka Sp. z o.o.", <Office />, "closed"],
  ["+", "Właściciele (osoby fizyczne)", <Team />, "open"],
  ["|+", "Kowalska Janina", <Person />, "open"],
  ["||+", "Dokumenty", papers, null, true],
  ["||+", "Składki ZUS", <Coins />],
];

const guideKinds = { "|": "line", ".": "none", "+": "tee", L: "elbow" };

const columns = [
  ["Opis", 300],
  ["Symbol", 120],
  ["Okres", 80],
  ["Utworzony", 150, "center"],
  ["Zmieniony", 150, "center"],
  ["Wydrukowany", 150, "center"],
  ["Wysłany", 150, "center"],
  ["Status", 100, "right"],
  ["Potwierdzony", 150, "center"],
];

const documents = [
  [
    "PIT-36 Kowalska Janina za rok 2025",
    "PIT-36(32)",
    "2025-12",
    "2026-04-14 11:20:00",
    "2026-04-14 12:01:00",
    "2026-04-14 11:32:00",
    "2026-04-14 11:45:00",
    "200",
    "2026-04-14 11:45:00",
  ],
];

const filters = [
  { name: "Ostatnie dokumenty", value: "-" },
  { name: "Typ dokumentu", value: "" },
  { name: "Wysłane", check: true },
  { name: "Status", value: "" },
  { name: "Odebrano UPO", check: true },
  { name: "Błąd", check: true },
  { name: "Do potwierdzenia", check: true },
  { name: "Korekta", check: true },
  { name: "Opis dokumentu", value: "" },
];

/* ---------- parts ---------- */

const Header = () => (
  <Caption>
    <TitleBar>
      <Logo>TM</Logo>
      <QuickButton aria-label="Wstecz"><DiscArrow icon={ArrowLeft} /></QuickButton>
      <QuickButton aria-label="Dalej"><DiscArrow icon={ArrowRight} /></QuickButton>
      <QuickLine />
      <QuickButton aria-label="Dodaj"><DiscArrow icon={Plus} /></QuickButton>
      <QuickButton aria-label="Edytuj" disabled><QuickPencil /></QuickButton>
      <QuickButton aria-label="Usuń" disabled><DiscArrow icon={X} /></QuickButton>
      <QuickLine />
      <QuickButton aria-label="Drukuj"><QuickPrint /></QuickButton>
      <QuickButton aria-label="Podgląd"><QuickPreview /></QuickButton>
      <QuickButton aria-label="Drukuj do PDF"><QuickPdf /></QuickButton>
      <QuickLine />
      <QuickButton aria-label="Odśwież" disabled><RefreshCw size={15} strokeWidth={3} /></QuickButton>
      <QuickLine />
      <QuickButton aria-label="Ustawienia">
        <Svg size={16}>
          <circle cx="8" cy="8" r="4" stroke="#fff" strokeWidth="3" />
          <path d="M8 1v3M8 12v3M1 8h3M12 8h3M3 3l2 2M11 11l2 2M13 3l-2 2M5 11l-2 2" stroke="#fff" strokeWidth="2.5" />
        </Svg>
      </QuickButton>
      <QuickMore aria-label="Więcej"><Triangle turn={90} size={6} color="#fff" /></QuickMore>
      <Title>{"TaxMachine  -  Wersja Profesjonalna"}</Title>
      <WindowButton aria-label="Minimalizuj">
        <Svg size={10}><path d="M0 5.500h10" stroke="#fff" /></Svg>
      </WindowButton>
      <WindowButton aria-label="Maksymalizuj">
        <Svg size={8}><path d="M.5.5h7v7h-7z" stroke="#fff" /></Svg>
      </WindowButton>
      <WindowButton aria-label="Zamknij">
        <Svg size={12}><path d="m.5.5 11 11m0-11-11 11" stroke="#fff" strokeWidth="1.3" /></Svg>
      </WindowButton>
    </TitleBar>
    <Tabs>
      {tabs.map(([name, width], i) => (
        <Tab key={name} $width={width} $active={i === 0}>{name}</Tab>
      ))}
    </Tabs>
  </Caption>
);

const RibbonBar = () => (
  <Ribbon>
    {ribbon.map((group) => (
      <Group key={group.title}>
        <GroupButtons>
          {group.buttons.map((b) => (
            <React.Fragment key={b.label}>
              {b.line && <RibbonLine />}
              <RibbonButton $width={b.width} disabled={b.disabled}>
                {b.icon}
                <RibbonLabel>{b.label}</RibbonLabel>
                {b.menu && <ChevronDown size={10} strokeWidth={3.5} color="#6b6b6b" />}
              </RibbonButton>
            </React.Fragment>
          ))}
        </GroupButtons>
        <GroupTitle>{group.title}</GroupTitle>
      </Group>
    ))}
    <Collapse aria-label="Zwiń wstążkę"><ChevronDown size={14} strokeWidth={3} /></Collapse>
  </Ribbon>
);

const Address = () => (
  <AddressRow>
    <Breadcrumbs>
      <Folder papers />
      {["Właściciele (osoby fizyczne)", "Kowalska Janina", "Dokumenty"].map((name) => (
        <CrumbItem key={name}>
          <Triangle color="#262626" />
          <Crumb href="#">{name}</Crumb>
        </CrumbItem>
      ))}
    </Breadcrumbs>
    <SearchLabel>
      <Search size={16} strokeWidth={1.6} />
      <SearchInput aria-label="Szukaj" placeholder="Szukaj (Ctrl + F)" />
    </SearchLabel>
    <ToggleButton aria-label="Siatka"><GridIcon /></ToggleButton>
    <ToggleButton aria-label="Filtrowanie"><FilterLines /></ToggleButton>
  </AddressRow>
);

const Navigator = () => (
  <TreePanel>
    <Tree>
      {tree.map(([lines, name, icon, state, selected], row) => (
        <TreeRow key={row}>
          {[...lines].map((kind, i) => (
            <Guide key={i} $kind={guideKinds[kind]}>
              {state && i === lines.length - 1 && (
                <Expander aria-label={name}>
                  {state === "open" ? (
                    <ChevronDown size={12} strokeWidth={3.2} />
                  ) : (
                    <ChevronRight size={12} strokeWidth={3.2} />
                  )}
                </Expander>
              )}
            </Guide>
          ))}
          <TreeIcon>{icon}</TreeIcon>
          <TreeLabel $selected={selected}>{name}</TreeLabel>
        </TreeRow>
      ))}
    </Tree>
    <ScrollBar $vertical>
      <ScrollButton aria-label="W górę"><Triangle turn={-90} /></ScrollButton>
      <Track $size={207} />
      <Thumb $size={381} />
      <Track $size={206} />
      <ScrollButton aria-label="W dół"><Triangle turn={90} /></ScrollButton>
    </ScrollBar>
  </TreePanel>
);

const Documents = () => (
  <GridPanel>
    <GridView>
      <Table>
        <thead>
          <tr>
            <Head $width={12} $mark><SunIcon /></Head>
            {columns.map(([name, width, align]) => (
              <Head key={name} $width={width} $align={align}>{name}</Head>
            ))}
          </tr>
        </thead>
        <tbody>
          {documents.map((doc) => (
            <tr key={doc[0]}>
              <MarkCell />
              {doc.map((text, i) => (
                <Cell key={columns[i][0]} $align={columns[i][2]}>
                  {i === 0 ? <DocName><DocIcon />{text}</DocName> : text}
                </Cell>
              ))}
            </tr>
          ))}
        </tbody>
      </Table>
    </GridView>
    <ScrollBar>
      <ScrollButton aria-label="W lewo"><Triangle turn={180} /></ScrollButton>
      <Thumb $size={1073} />
      <Track $size={155} />
      <ScrollButton aria-label="W prawo"><Triangle /></ScrollButton>
    </ScrollBar>
  </GridPanel>
);

const Filters = () => (
  <FilterPanel>
    <FilterHead><FilterLines />Filtrowanie</FilterHead>
    <FilterBody>
      {filters.map((f) => (
        <FilterRow key={f.name}>
          <FilterName>{f.name}</FilterName>
          <FilterValue>
            {f.check ? <TriState type="checkbox" /> : <FilterInput defaultValue={f.value} />}
          </FilterValue>
        </FilterRow>
      ))}
    </FilterBody>
    <ClearButton><ClearFilterIcon />Usuń filtry</ClearButton>
  </FilterPanel>
);

const Handle = () => (
  <Splitter>
    <Dot />
    <Dot />
    <Dot />
  </Splitter>
);

const Status = () => (
  <StatusBar>
    <StatusItem $width={159}><File size={16} strokeWidth={1.6} />Obiektów: 1</StatusItem>
    <StatusItem $width={330}><LicenceIcon />Licencja dla: Przykładowa Firma Janina Kowalska</StatusItem>
    <StatusItem $width={157}><Globe size={16} strokeWidth={1.6} />taxmachine.pl</StatusItem>
    <StatusItem $width={127}><Hash size={16} strokeWidth={1.6} />3.6827</StatusItem>
    <StatusAction>Aktualizacja</StatusAction>
    <StatusItem $width={8} />
    <StatusItem $width={330}><Database size={16} strokeWidth={1.6} />SQLite 3.54.1: "baza-robocza.db".</StatusItem>
    <StatusItem $width={198}><UpdatesIcon />Aktualizacje: 2027-12-31</StatusItem>
    <Grip><GripIcon /></Grip>
  </StatusBar>
);

const App = () => (
  <>
    <GlobalStyle />
    <Window>
      <Header />
      <RibbonBar />
      <Address />
      <Work>
        <Navigator />
        <Handle />
        <Documents />
        <Handle />
        <Filters />
      </Work>
      <Status />
    </Window>
  </>
);

export default App;
